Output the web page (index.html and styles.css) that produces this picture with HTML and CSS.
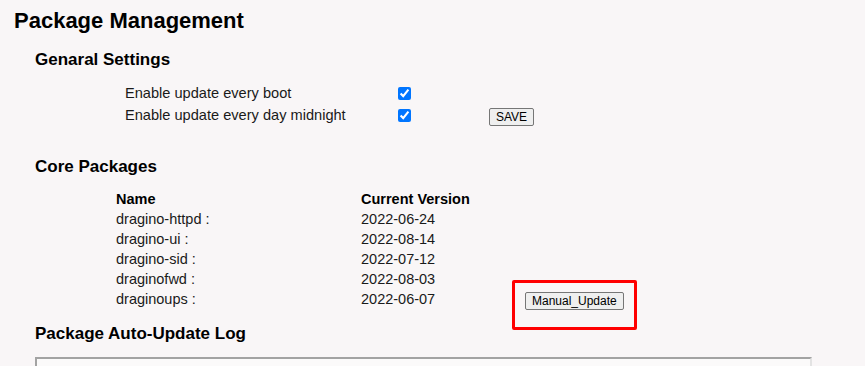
FILE: index.html
```html
<!DOCTYPE html>
<html lang="en">
<head>
  <meta charset="UTF-8" />
  <title>Package Management</title>
  <link rel="stylesheet" href="styles.css">
</head>
<body>
  <h1>Package Management</h1>

  <div class="section">
    <h3 class="first">Genaral Settings</h3>
    <div class="settings">
      <span>Enable update every boot</span>
      <input type="checkbox" checked>
      <span></span>

      <span>Enable update every day midnight</span>
      <input type="checkbox" checked>
      <button class="btn">SAVE</button>
    </div>

    <h3 class="core">Core Packages</h3>
    <div class="packages">
      <span class="head">Name</span>
      <span class="head">Current Version</span>
      <span></span>

      <span>dragino-httpd :</span><span>2022-06-24</span><span></span>
      <span>dragino-ui :</span><span>2022-08-14</span><span></span>
      <span>dragino-sid :</span><span>2022-07-12</span><span></span>
      <span>draginofwd :</span><span>2022-08-03</span><span></span>
      <span>draginoups :</span><span>2022-06-07</span>
      <span class="update-cell">
        <button class="btn">Manual_Update</button>
        <span class="mark"></span>
      </span>
    </div>

    <h3 class="log-title">Package Auto-Update Log</h3>
    <textarea class="log" readonly></textarea>
  </div>
</body>
</html>
```

FILE: styles.css
```css
body {
  font-family: "Liberation Sans", Arial, sans-serif;
  background-color: #f9f6f7;
  color: #1a1a1a;
  margin: 0;
  padding: 8px 14px 0;
}

h1 {
  font-size: 22px;
  line-height: 26px;
  margin: 0;
  color: #000;
}

.section {
  padding-left: 21px;
}

h3 {
  font-size: 17px;
  line-height: 20px;
  margin: 0;
  color: #000;
}

h3.first {
  margin-top: 16px;
}

h3.core {
  margin-top: 31px;
}

h3.log-title {
  margin-top: 15px;
}

.settings {
  display: grid;
  grid-template-columns: 273px 91px auto;
  grid-auto-rows: 22px;
  align-items: center;
  margin: 12px 0 0 90px;
  font-size: 14.6px;
}

.settings input {
  margin: 0;
  width: 13px;
  height: 13px;
}

.settings .btn {
  justify-self: start;
  margin-top: 4px;
}

.btn {
  font-family: "Liberation Sans", Arial, sans-serif;
  font-size: 12px;
  line-height: 14px;
  padding: 1px 6px;
  background-color: #efefef;
  border: 1px solid #767676;
  border-radius: 2px;
  color: #000;
}

.packages {
  display: grid;
  grid-template-columns: 245px 164px auto;
  grid-auto-rows: 20px;
  align-items: center;
  margin: 12px 0 0 81px;
  font-size: 14.5px;
}

.packages .head {
  font-weight: bold;
  color: #000;
}

.update-cell {
  position: relative;
  display: flex;
  align-items: center;
  margin-top: 4px;
}

.mark {
  position: absolute;
  left: -13px;
  top: -12px;
  width: 125px;
  height: 50px;
  box-sizing: border-box;
  border: 3px solid #ff0000;
  border-radius: 2px;
}

.log {
  display: block;
  margin-top: 13px;
  width: 777px;
  height: 9px;
  box-sizing: border-box;
  border: 2px solid #a3a3a3;
  border-right-color: #e3e3e3;
  border-bottom: none;
  background-color: #fbfafa;
  resize: none;
}
```
